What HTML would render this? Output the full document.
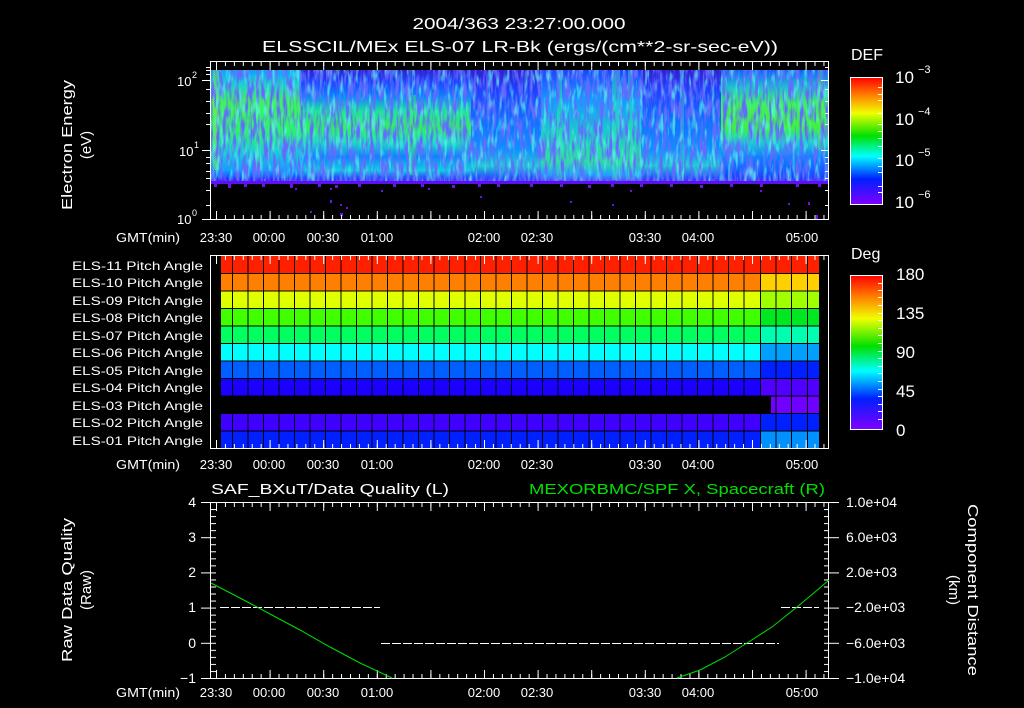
<!DOCTYPE html>
<html><head><meta charset="utf-8"><style>
html,body{margin:0;padding:0;background:#000;}
svg{display:block;}
text{font-family:"Liberation Sans",sans-serif;fill:#fff;}
</style></head><body>
<svg width="1024" height="708" viewBox="0 0 1024 708" xmlns="http://www.w3.org/2000/svg">
<defs>
<linearGradient id="gA" x1="0" y1="70" x2="0" y2="184" gradientUnits="userSpaceOnUse">
<stop offset="0" stop-color="#10a0ff"/><stop offset="0.13" stop-color="#20d0d0"/><stop offset="0.27" stop-color="#40f060"/><stop offset="0.53" stop-color="#30f070"/><stop offset="0.7" stop-color="#20d0d0"/><stop offset="0.88" stop-color="#10a0ff"/><stop offset="0.93" stop-color="#1060ff"/><stop offset="0.96" stop-color="#3020ff"/><stop offset="1" stop-color="#6010ff"/></linearGradient>
<linearGradient id="gB" x1="0" y1="70" x2="0" y2="184" gradientUnits="userSpaceOnUse">
<stop offset="0" stop-color="#3020d0"/><stop offset="0.1" stop-color="#2040ff"/><stop offset="0.23" stop-color="#1080ff"/><stop offset="0.36" stop-color="#20e0a0"/><stop offset="0.5" stop-color="#30f060"/><stop offset="0.63" stop-color="#20e0c0"/><stop offset="0.76" stop-color="#1080ff"/><stop offset="0.88" stop-color="#10d0e0"/><stop offset="0.94" stop-color="#2050ff"/><stop offset="1" stop-color="#6010ff"/></linearGradient>
<linearGradient id="gC" x1="0" y1="70" x2="0" y2="184" gradientUnits="userSpaceOnUse">
<stop offset="0" stop-color="#3020d0"/><stop offset="0.18" stop-color="#2040ff"/><stop offset="0.45" stop-color="#1070ff"/><stop offset="0.7" stop-color="#1090ff"/><stop offset="0.84" stop-color="#20d0d0"/><stop offset="0.94" stop-color="#2050ff"/><stop offset="1" stop-color="#6010ff"/></linearGradient>
<linearGradient id="gD" x1="0" y1="70" x2="0" y2="184" gradientUnits="userSpaceOnUse">
<stop offset="0" stop-color="#2040ff"/><stop offset="0.27" stop-color="#10a0ff"/><stop offset="0.6" stop-color="#20d0c0"/><stop offset="0.8" stop-color="#30e0a0"/><stop offset="0.92" stop-color="#20a0ff"/><stop offset="1" stop-color="#6010ff"/></linearGradient>
<linearGradient id="gE" x1="0" y1="70" x2="0" y2="184" gradientUnits="userSpaceOnUse">
<stop offset="0" stop-color="#1060ff"/><stop offset="0.15" stop-color="#20c0d0"/><stop offset="0.3" stop-color="#40f060"/><stop offset="0.5" stop-color="#40f040"/><stop offset="0.63" stop-color="#20d0d0"/><stop offset="0.76" stop-color="#1080ff"/><stop offset="0.88" stop-color="#1060ff"/><stop offset="0.94" stop-color="#2040ff"/><stop offset="1" stop-color="#6010ff"/></linearGradient>
<linearGradient id="cbar" x1="0" y1="0" x2="0" y2="1">
<stop offset="0" stop-color="#ff0000"/><stop offset="0.14" stop-color="#ff8000"/><stop offset="0.28" stop-color="#f0ff00"/><stop offset="0.46" stop-color="#00e000"/><stop offset="0.62" stop-color="#00ffff"/><stop offset="0.8" stop-color="#0020ff"/><stop offset="1" stop-color="#8000ff"/></linearGradient>
<filter id="noise" x="0" y="0" width="1" height="1">
<feTurbulence type="fractalNoise" baseFrequency="0.3 0.05" numOctaves="2" seed="3"/>
<feColorMatrix type="matrix" values="0 0 0 0 0.12  0 0 0 0 0.15  0 0 0 0 1  4 0 0 0 -1.7"/>
</filter>
<filter id="noise2" x="0" y="0" width="1" height="1">
<feTurbulence type="fractalNoise" baseFrequency="0.25 0.06" numOctaves="2" seed="9"/>
<feColorMatrix type="matrix" values="0 0 0 0 0.1  0 0 0 0 0.95  0 0 0 0 0.8  4 0 0 0 -2.1"/>
</filter>
<pattern id="tx5" x="216" y="0" width="8.933" height="10" patternUnits="userSpaceOnUse"><rect x="0" y="0" width="1" height="10" fill="#fff"/></pattern>
<pattern id="tx30" x="216" y="0" width="53.6" height="10" patternUnits="userSpaceOnUse"><rect x="0" y="0" width="1" height="10" fill="#fff"/></pattern>
<pattern id="ty5" x="0" y="502" width="10" height="7.04" patternUnits="userSpaceOnUse"><rect x="0" y="0" width="10" height="1" fill="#fff"/></pattern>
<pattern id="ty1" x="0" y="502" width="10" height="35.2" patternUnits="userSpaceOnUse"><rect x="0" y="0" width="10" height="1" fill="#fff"/></pattern>
</defs>

<!-- titles -->
<text x="519" y="29" font-size="16" text-anchor="middle" textLength="213" lengthAdjust="spacingAndGlyphs">2004/363 23:27:00.000</text>
<text x="520" y="52" font-size="16" text-anchor="middle" textLength="516" lengthAdjust="spacingAndGlyphs">ELSSCIL/MEx ELS-07 LR-Bk  (ergs/(cm**2-sr-sec-eV))</text>

<!-- spectrogram -->
<g>
<rect x="211" y="70" width="90" height="114" fill="url(#gA)"/>
<rect x="301" y="70" width="170" height="114" fill="url(#gB)"/>
<rect x="471" y="70" width="70" height="114" fill="url(#gC)"/>
<rect x="541" y="70" width="100" height="114" fill="url(#gD)"/>
<rect x="641" y="70" width="80" height="114" fill="url(#gC)"/>
<rect x="721" y="70" width="108" height="114" fill="url(#gE)"/>
<rect x="213" y="70" width="6" height="100" fill="#80f040" opacity="0.5"/>
<rect x="255" y="75" width="6" height="95" fill="#40f080" opacity="0.4"/>
<rect x="408" y="95" width="8" height="80" fill="#40f060" opacity="0.4"/>
<rect x="557" y="70" width="5" height="110" fill="#30f0a0" opacity="0.45"/>
<rect x="612" y="70" width="8" height="110" fill="#30f0b0" opacity="0.45"/>
<rect x="628" y="70" width="5" height="110" fill="#30f0a0" opacity="0.4"/>
<rect x="680" y="70" width="4" height="110" fill="#30e0c0" opacity="0.4"/>
<rect x="818" y="70" width="5" height="80" fill="#60f040" opacity="0.4"/>
<rect x="211" y="70" width="618" height="112" filter="url(#noise)"/>
<rect x="211" y="70" width="618" height="112" filter="url(#noise2)" opacity="0.7"/>
<rect x="211" y="181" width="618" height="3" fill="#6010f0"/>
<g fill="#7010f0">
<rect x="214" y="184" width="3" height="3"/><rect x="228" y="184" width="3" height="4"/><rect x="244" y="184" width="3" height="3"/><rect x="262" y="184" width="3" height="3"/><rect x="290" y="184" width="3" height="4"/><rect x="318" y="184" width="3" height="3"/><rect x="335" y="185" width="3" height="3"/><rect x="358" y="184" width="3" height="3"/><rect x="393" y="184" width="3" height="3"/><rect x="421" y="184" width="3" height="3"/><rect x="452" y="185" width="3" height="3"/><rect x="478" y="184" width="3" height="3"/><rect x="497" y="184" width="3" height="3"/><rect x="530" y="184" width="3" height="3"/><rect x="560" y="184" width="3" height="3"/><rect x="588" y="185" width="3" height="3"/><rect x="611" y="184" width="3" height="3"/><rect x="640" y="184" width="3" height="3"/><rect x="670" y="184" width="3" height="3"/><rect x="700" y="185" width="3" height="3"/><rect x="730" y="184" width="3" height="3"/><rect x="760" y="184" width="3" height="3"/><rect x="796" y="184" width="3" height="3"/><rect x="818" y="184" width="3" height="3"/>
<rect x="295" y="188" width="2" height="2"/><rect x="330" y="188" width="2" height="2"/><rect x="381" y="190" width="2" height="2"/><rect x="428" y="188" width="2" height="2"/><rect x="630" y="190" width="2" height="2"/><rect x="760" y="190" width="2" height="2"/>
<rect x="330" y="200" width="2" height="3"/><rect x="340" y="204" width="2" height="2"/><rect x="346" y="207" width="2" height="2"/><rect x="480" y="196" width="2" height="2"/><rect x="570" y="201" width="2" height="2"/><rect x="612" y="204" width="2" height="2"/><rect x="788" y="203" width="2" height="2"/><rect x="808" y="202" width="2" height="3"/><rect x="340" y="213" width="3" height="3"/><rect x="310" y="211" width="2" height="2"/><rect x="816" y="215" width="2" height="4"/>
</g>
</g>
<!-- spectrogram frame -->
<rect x="210.5" y="61.5" width="618" height="158" fill="none" stroke="#fff" stroke-width="1"/>
<rect x="211" y="62" width="618" height="4" fill="url(#tx5)"/>
<rect x="211" y="62" width="618" height="8" fill="url(#tx30)"/>
<rect x="211" y="215" width="618" height="4" fill="url(#tx5)"/>
<rect x="211" y="211" width="618" height="8" fill="url(#tx30)"/>
<g stroke="#fff" stroke-width="1">
<path d="M202 80.5h8M202 150.5h8M202 219.5h8M821 80.5h8M821 150.5h8"/>
<path d="M206 67h4M206 70h4M206 74h4M206 89h4M206 101h4M206 113h4M206 124h4M206 157h4M206 163h4M206 171h4M206 178h4M206 190h4M206 205h4M825 67h4M825 89h4M825 101h4M825 113h4M825 124h4M825 157h4M825 163h4M825 171h4M825 178h4M825 190h4M825 205h4" transform="translate(0,0.5)"/>
</g>
<text x="177" y="86" font-size="13">10</text><text x="192" y="78" font-size="9">2</text>
<text x="179" y="156" font-size="13">10</text><text x="194" y="148" font-size="9">1</text>
<text x="177" y="224" font-size="13">10</text><text x="192" y="216" font-size="9">0</text>
<text transform="translate(72,145) rotate(-90)" font-size="15" text-anchor="middle" textLength="130" lengthAdjust="spacingAndGlyphs">Electron Energy</text>
<text transform="translate(91,145) rotate(-90)" font-size="15" text-anchor="middle">(eV)</text>
<!-- DEF colorbar -->
<text x="851" y="60" font-size="16">DEF</text>
<rect x="850.5" y="77.5" width="32" height="127" fill="url(#cbar)" stroke="#fff"/>
<g stroke="#fff"><path d="M878 87.5h4M878 94.5h4M878 100.5h4M878 113.5h4M878 124.5h4M878 131.5h4M878 138.5h4M878 146.5h4M878 158.5h4M878 166.5h4M878 172.5h4M878 186.5h4M878 192.5h4"/></g>
<text x="895" y="83" font-size="17">10</text><text x="918" y="73" font-size="11">−3</text>
<text x="895" y="125" font-size="17">10</text><text x="918" y="115" font-size="11">−4</text>
<text x="895" y="166" font-size="17">10</text><text x="918" y="156" font-size="11">−5</text>
<text x="895" y="208" font-size="17">10</text><text x="918" y="198" font-size="11">−6</text>

<!-- time axis labels -->
<g font-size="13">
<text x="116" y="242" textLength="64" lengthAdjust="spacingAndGlyphs">GMT(min)</text>
<text x="216" y="242" text-anchor="middle">23:30</text><text x="269" y="242" text-anchor="middle">00:00</text><text x="323" y="242" text-anchor="middle">00:30</text><text x="377" y="242" text-anchor="middle">01:00</text><text x="484" y="242" text-anchor="middle">02:00</text><text x="537" y="242" text-anchor="middle">02:30</text><text x="645" y="242" text-anchor="middle">03:30</text><text x="698" y="242" text-anchor="middle">04:00</text><text x="802" y="242" text-anchor="middle">05:00</text>
<text x="116" y="469" textLength="64" lengthAdjust="spacingAndGlyphs">GMT(min)</text>
<text x="216" y="469" text-anchor="middle">23:30</text><text x="269" y="469" text-anchor="middle">00:00</text><text x="323" y="469" text-anchor="middle">00:30</text><text x="377" y="469" text-anchor="middle">01:00</text><text x="484" y="469" text-anchor="middle">02:00</text><text x="537" y="469" text-anchor="middle">02:30</text><text x="645" y="469" text-anchor="middle">03:30</text><text x="698" y="469" text-anchor="middle">04:00</text><text x="802" y="469" text-anchor="middle">05:00</text>
<text x="116" y="697" textLength="64" lengthAdjust="spacingAndGlyphs">GMT(min)</text>
<text x="216" y="697" text-anchor="middle">23:30</text><text x="269" y="697" text-anchor="middle">00:00</text><text x="323" y="697" text-anchor="middle">00:30</text><text x="377" y="697" text-anchor="middle">01:00</text><text x="484" y="697" text-anchor="middle">02:00</text><text x="537" y="697" text-anchor="middle">02:30</text><text x="645" y="697" text-anchor="middle">03:30</text><text x="698" y="697" text-anchor="middle">04:00</text><text x="802" y="697" text-anchor="middle">05:00</text>
</g>

<!-- pitch angle panel -->
<g>
<rect x="221" y="256" width="540" height="17.5" fill="#ff2000"/>
<rect x="221" y="273.5" width="540" height="17.5" fill="#ff8000"/>
<rect x="221" y="291" width="540" height="17.5" fill="#e0ff00"/>
<rect x="221" y="308.5" width="540" height="17.5" fill="#40ff00"/>
<rect x="221" y="326" width="540" height="17.5" fill="#00ff60"/>
<rect x="221" y="343.5" width="540" height="17.5" fill="#00ffff"/>
<rect x="221" y="361" width="540" height="17.5" fill="#0060ff"/>
<rect x="221" y="378.5" width="540" height="17.5" fill="#1c00ff"/>
<rect x="221" y="413.5" width="540" height="17.5" fill="#4000ff"/>
<rect x="221" y="431" width="540" height="17.5" fill="#0020ff"/>
<rect x="761" y="256" width="58" height="17.5" fill="#ff2000"/>
<rect x="761" y="273.5" width="58" height="17.5" fill="#ffd000"/>
<rect x="761" y="291" width="58" height="17.5" fill="#a0ff00"/>
<rect x="761" y="308.5" width="58" height="17.5" fill="#00e820"/>
<rect x="761" y="326" width="58" height="17.5" fill="#00ffb0"/>
<rect x="761" y="343.5" width="58" height="17.5" fill="#00a0ff"/>
<rect x="761" y="361" width="58" height="17.5" fill="#0020ff"/>
<rect x="761" y="378.5" width="58" height="17.5" fill="#5000ff"/>
<rect x="771" y="396" width="48" height="17.5" fill="#7000ff"/>
<rect x="761" y="413.5" width="58" height="17.5" fill="#0020ff"/>
<rect x="761" y="431" width="58" height="17.5" fill="#0090ff"/>
<g stroke="#000" stroke-width="1">
<path d="M221 273.5h598M221 291h598M221 308.5h598M221 326h598M221 343.5h598M221 361h598M221 378.5h598M221 396h598M221 413.5h598M221 431h598"/>
<path d="M232.5 256v192M248 256v192M263.5 256v192M279 256v192M294.5 256v192M310 256v192M325.5 256v192M341 256v192M356.5 256v192M372 256v192M387.5 256v192M403 256v192M418.5 256v192M434 256v192M449.5 256v192M465 256v192M480.5 256v192M496 256v192M511.5 256v192M527 256v192M542.5 256v192M558 256v192M573.5 256v192M589 256v192M604.5 256v192M620 256v192M635.5 256v192M651 256v192M666.5 256v192M682 256v192M697.5 256v192M713 256v192M728.5 256v192M744 256v192M760.5 256v192M776 256v192M791.5 256v192M807.5 256v192"/>
</g>
</g>
<rect x="210.5" y="255.5" width="618" height="193" fill="none" stroke="#fff"/>
<rect x="211" y="256" width="618" height="4" fill="url(#tx5)"/>
<rect x="211" y="256" width="618" height="8" fill="url(#tx30)"/>
<rect x="211" y="444" width="618" height="4" fill="url(#tx5)"/>
<rect x="211" y="440" width="618" height="8" fill="url(#tx30)"/>
<g font-size="12" text-anchor="end">
<text x="203" y="270" textLength="131" lengthAdjust="spacingAndGlyphs">ELS-11 Pitch Angle</text>
<text x="203" y="287" textLength="131" lengthAdjust="spacingAndGlyphs">ELS-10 Pitch Angle</text>
<text x="203" y="305" textLength="131" lengthAdjust="spacingAndGlyphs">ELS-09 Pitch Angle</text>
<text x="203" y="322" textLength="131" lengthAdjust="spacingAndGlyphs">ELS-08 Pitch Angle</text>
<text x="203" y="340" textLength="131" lengthAdjust="spacingAndGlyphs">ELS-07 Pitch Angle</text>
<text x="203" y="357" textLength="131" lengthAdjust="spacingAndGlyphs">ELS-06 Pitch Angle</text>
<text x="203" y="375" textLength="131" lengthAdjust="spacingAndGlyphs">ELS-05 Pitch Angle</text>
<text x="203" y="392" textLength="131" lengthAdjust="spacingAndGlyphs">ELS-04 Pitch Angle</text>
<text x="203" y="410" textLength="131" lengthAdjust="spacingAndGlyphs">ELS-03 Pitch Angle</text>
<text x="203" y="427" textLength="131" lengthAdjust="spacingAndGlyphs">ELS-02 Pitch Angle</text>
<text x="203" y="445" textLength="131" lengthAdjust="spacingAndGlyphs">ELS-01 Pitch Angle</text>
</g>
<!-- Deg colorbar -->
<text x="851" y="259" font-size="16">Deg</text>
<rect x="850.5" y="275.5" width="32" height="154" fill="url(#cbar)" stroke="#fff"/>
<g stroke="#fff"><path d="M878 283.5h4M878 290.5h4M878 297.5h4M878 305.5h4M878 313.5h4M878 320.5h4M878 328.5h4M878 335.5h4M878 343.5h4M878 351.5h4M878 358.5h4M878 366.5h4M878 373.5h4M878 381.5h4M878 389.5h4M878 396.5h4M878 404.5h4M878 411.5h4M878 419.5h4"/></g>
<g font-size="17">
<text x="896" y="280">180</text><text x="896" y="319">135</text><text x="896" y="358">90</text><text x="896" y="397">45</text><text x="896" y="436">0</text>
</g>

<!-- bottom panel -->
<text x="211" y="494" font-size="15" textLength="238" lengthAdjust="spacingAndGlyphs">SAF_BXuT/Data Quality (L)</text>
<text x="529" y="494" font-size="15" style="fill:#00e000" textLength="296" lengthAdjust="spacingAndGlyphs">MEXORBMC/SPF X, Spacecraft (R)</text>
<rect x="210.5" y="502.5" width="618" height="176" fill="none" stroke="#fff"/>
<rect x="211" y="503" width="618" height="4" fill="url(#tx5)"/>
<rect x="211" y="503" width="618" height="8" fill="url(#tx30)"/>
<rect x="211" y="674" width="618" height="4" fill="url(#tx5)"/>
<rect x="211" y="670" width="618" height="8" fill="url(#tx30)"/>
<rect x="211" y="502" width="5" height="176" fill="url(#ty5)"/>
<rect x="201" y="502" width="10" height="177" fill="url(#ty1)"/>
<rect x="824" y="502" width="5" height="176" fill="url(#ty5)"/>
<rect x="829" y="502" width="10" height="177" fill="url(#ty1)"/>
<g font-size="14" text-anchor="end">
<text x="196" y="507">4</text><text x="196" y="542">3</text><text x="196" y="577">2</text><text x="196" y="612">1</text><text x="196" y="648">0</text><text x="196" y="683">−1</text>
</g>
<g font-size="14">
<text x="846" y="507">1.0e+04</text><text x="846" y="542">6.0e+03</text><text x="846" y="577">2.0e+03</text><text x="846" y="612">−2.0e+03</text><text x="846" y="648">−6.0e+03</text><text x="846" y="683">−1.0e+04</text>
</g>
<text transform="translate(72,590) rotate(-90)" font-size="15" text-anchor="middle" textLength="144" lengthAdjust="spacingAndGlyphs">Raw Data Quality</text>
<text transform="translate(91,590) rotate(-90)" font-size="15" text-anchor="middle">(Raw)</text>
<text transform="translate(968,590) rotate(90)" font-size="15" text-anchor="middle" textLength="172" lengthAdjust="spacingAndGlyphs">Component Distance</text>
<text transform="translate(949,590) rotate(90)" font-size="15" text-anchor="middle">(km)</text>
<g stroke="#fff" stroke-width="1" fill="none" stroke-dasharray="9,2">
<path d="M220 607.5h160"/><path d="M381 643.5h398"/><path d="M781 607.5h38"/>
</g>
<path d="M211 583 L240 598 L270 614 L300 630 L330 647 L360 663 L392 678" stroke="#00e000" fill="none" stroke-width="1"/>
<path d="M677 678 L700 670 L725 657 L747 643 L772 627 L797 607 L815 592 L829 580" stroke="#00e000" fill="none" stroke-width="1"/>
</svg>
</body></html>
